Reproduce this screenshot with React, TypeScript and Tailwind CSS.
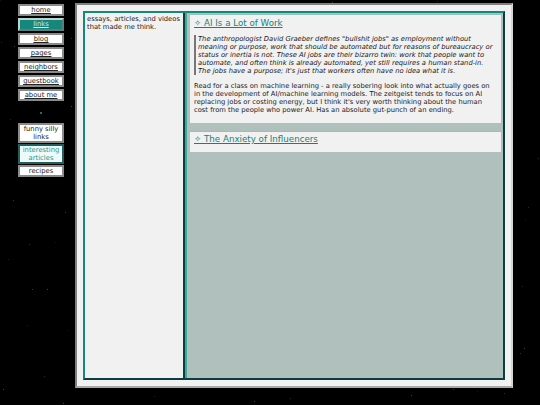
const STARS: [number, number, number][] = Array.from({ length: 150 }, (_, i) => [
  (i * 197 + (i * i * 13) % 101) % 540,
  (i * 89 + (i * i * 7) % 67) % 405,
  0.1 + ((i * 37) % 10) / 30,
]);

function NavButton({ children, variant = "plain" }: { children: React.ReactNode; variant?: "plain" | "active" | "current" }) {
  const base = "block w-[46px] border-2 text-center text-[6.8px] leading-[8px] ";
  if (variant === "active") {
    return <a className={base + "border-t-[#b5d6d2] border-l-[#b5d6d2] border-b-[#5d7f7b] border-r-[#5d7f7b] bg-[#16877c] pb-[1px] text-[#cfe8e4]"}>{children}</a>;
  }
  if (variant === "current") {
    return <a className={base + "border-[#245f5f] bg-[#eefafa] text-[#2b9389]"}>{children}</a>;
  }
  return <a className={base + "border-[#8a8a8a] bg-white text-[#222222]"}>{children}</a>;
}

export default function App() {
  return (
    <div className="relative flex h-[405px] w-[540px] overflow-hidden bg-black font-['DejaVu_Sans',sans-serif] text-[6.75px] text-[#1a1a1a] transform-gpu">
      <svg className="absolute inset-0" width="540" height="405" aria-hidden="true">
        {STARS.map(([x, y, o], i) => (
          <rect key={i} x={x} y={y} width="1" height="1" fill="#9fb5b5" opacity={o} />
        ))}
        <rect x="40" y="112" width="2" height="2" fill="#1d6d66" />
      </svg>
      <nav className="relative ml-[18px] mt-[4px] flex w-[46px] flex-col">
        <div className="flex flex-col gap-[2px] underline">
          <NavButton>home</NavButton>
          <NavButton variant="active">links</NavButton>
          <NavButton>blog</NavButton>
          <NavButton>pages</NavButton>
          <NavButton>neighbors</NavButton>
          <NavButton>guestbook</NavButton>
          <NavButton>about me</NavButton>
        </div>
        <div className="mt-[22px] flex flex-col gap-[1px]">
          <NavButton>funny silly links</NavButton>
          <NavButton variant="current">interesting articles</NavButton>
          <NavButton>recipes</NavButton>
        </div>
      </nav>
      <main className="relative ml-[11px] mt-[3px] h-[385px] w-[438px] border-2 border-t-[#808080] border-l-[#808080] border-b-[#a9a9a9] border-r-[#d4d4d4] bg-[#f1f1f1] p-[6px]">
        <div className="flex h-full border-[2px] border-t-[#17877c] border-l-[#17877c] border-b-[#0b3f3f] border-r-[#0b3f3f]">
          <aside className="w-[98px] shrink-0 bg-[#f1f1f1] pl-[2px] pt-[2px] leading-[8px]">
            essays, articles, and videos that made me think.
          </aside>
          <div className="w-[2px] shrink-0 bg-[#0b3f3f]" />
          <div className="w-[2px] shrink-0 bg-[#3fa79c]" />
          <section className="flex min-w-0 flex-1 flex-col gap-[8px] bg-[#b0c0bc] pl-[3px] pr-[2px] pt-[1px]">
            <article className="border-t border-[#8fc4bd] bg-[#f1f1f1] pl-[4px] pr-[4px] pb-[9px] pt-[3px]">
              <h2 className="text-[8.7px] leading-[11px] text-[#14827a] underline">✧ AI Is a Lot of Work</h2>
              <blockquote className="mt-[6px] border-l-2 border-[#777777] pl-[2px] italic leading-[8px]">
                The anthropologist David Graeber defines "bullshit jobs" as employment without meaning or purpose, work that should be automated but for reasons of bureaucracy or status or inertia is not. These AI jobs are their bizarro twin: work that people want to automate, and often think is already automated, yet still requires a human stand-in. The jobs have a purpose; it's just that workers often have no idea what it is.
              </blockquote>
              <p className="mt-[7px] leading-[8px]">
                Read for a class on machine learning - a really sobering look into what actually goes on in the development of AI/machine learning models. The zeitgeist tends to focus on AI replacing jobs or costing energy, but I think it's very worth thinking about the human cost from the people who power AI. Has an absolute gut-punch of an ending.
              </p>
            </article>
            <article className="border-t border-[#8fc4bd] bg-[#f1f1f1] pl-[4px] pr-[4px] pb-[7px] pt-[2px]">
              <h2 className="text-[8.7px] leading-[11px] text-[#14827a] underline">✧ The Anxiety of Influencers</h2>
            </article>
          </section>
        </div>
      </main>
    </div>
  );
}
